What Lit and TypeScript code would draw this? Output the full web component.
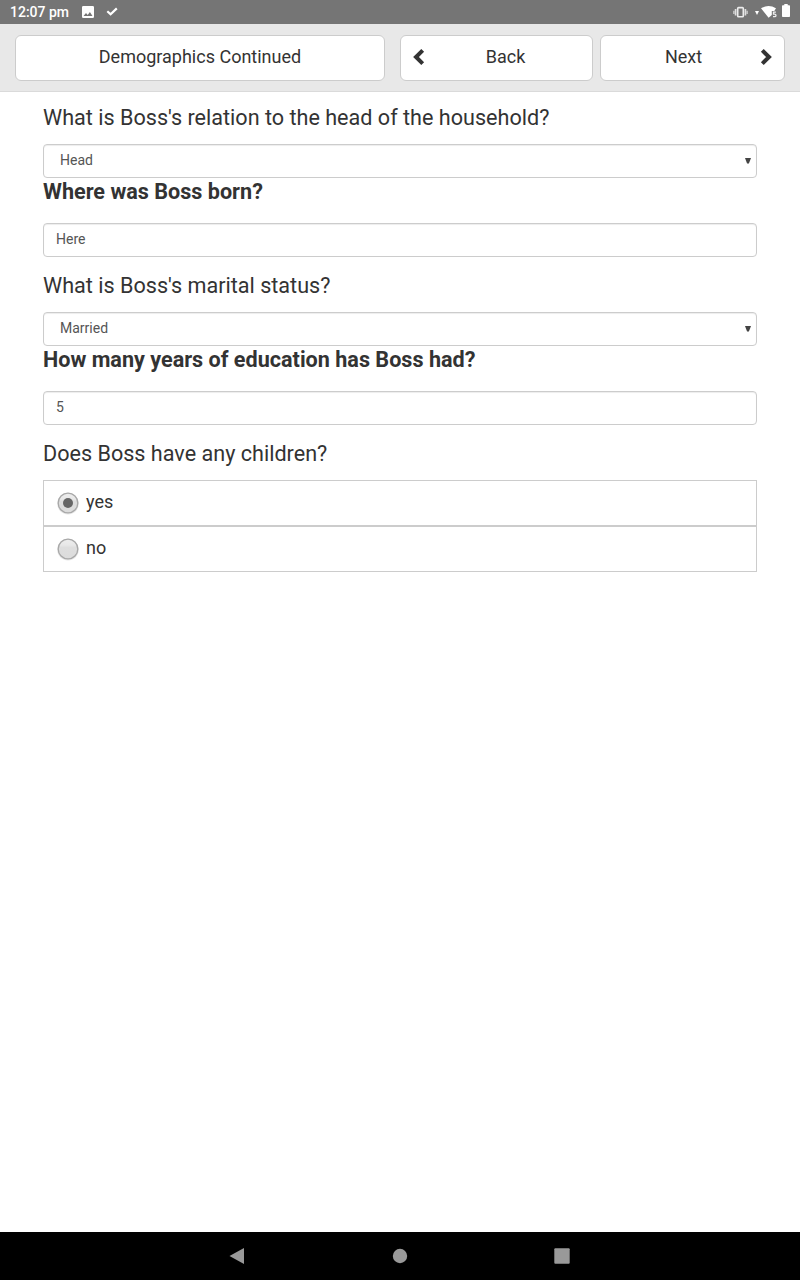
import { LitElement, html, css, svg } from "lit";
import { customElement, state } from "lit/decorators.js";

@customElement("app-root")
export class AppRoot extends LitElement {
  @state() private hasChildren = "yes";

  static styles = css`
    :host {
      display: flex;
      flex-direction: column;
      width: 100%;
      height: 1280px;
      background: #fff;
      color: #333;
      font-family: Roboto, "Liberation Sans", sans-serif;
    }
    * { box-sizing: border-box; }
    svg { display: block; flex: none; }
    .status {
      height: 24px;
      background: #757575;
      color: #fff;
      display: flex;
      align-items: center;
      padding: 0 10px;
      font-size: 14px;
      font-weight: 500;
      line-height: 24px;
    }
    .clock { width: 72px; white-space: nowrap; }
    .check { margin-left: 12px; }
    .spacer { flex: 1; }
    .vibrate { margin-right: 6px; }
    .battery { margin: 0 0 3px 5px; }
    .header {
      height: 68px;
      background: #e8e8e8;
      border-bottom: 1px solid #dadada;
      padding: 11px 15px 10px;
      display: grid;
      grid-template-columns: 378px 193px 185px;
      column-gap: 7px;
    }
    .title { width: 370px; }
    .btn {
      height: 46px;
      background: #fff;
      border: 1px solid #ccc;
      border-radius: 6px;
      font-size: 18px;
      line-height: 42px;
      display: flex;
      align-items: center;
      justify-content: center;
      padding: 0 12px;
    }
    .btn span { flex: 1; text-align: center; align-self: flex-start; }
    .btn svg { margin-bottom: 2px; }
    .back span { padding-left: 6px; }
    .forward span { padding-right: 6px; }
    .form {
      flex: 1;
      padding: 14px 43px 0;
    }
    .q {
      font-size: 21.6px;
      line-height: 24px;
      margin-bottom: 14px;
      white-space: nowrap;
    }
    .bold { font-weight: 700; margin: 2px 0 19px; }
    .q.next { margin-top: 17px; }
    .field {
      height: 34px;
      border: 1px solid #ccc;
      border-radius: 4px;
      box-shadow: inset 0 1px 1px rgba(0, 0, 0, 0.075);
      font-size: 14px;
      line-height: 30px;
      color: #555;
      padding: 0 12px;
      display: flex;
      justify-content: space-between;
    }
    .select { padding: 0 5px 0 16px; align-items: center; }
    .select span { align-self: flex-start; }
    .select svg { margin-bottom: 1px; }
    .option {
      height: 46px;
      border: 1px solid #ccc;
      display: flex;
      align-items: center;
      padding: 0 12px;
      font-size: 18px;
      line-height: 42px;
    }
    .option span { margin-left: 6px; align-self: flex-start; }
    .nav {
      height: 48px;
      background: #000;
      display: flex;
      justify-content: center;
      align-items: center;
      gap: 138px;
    }
  `;

  private select(value: string) {
    return html`<div class="field select">
      <span>${value}</span>
      <svg width="7" height="7" viewBox="0 0 7 7"><path d="M1 1h6L4.900 6.500H3.100z" fill="#444" /></svg>
    </div>`;
  }

  private radio(value: string) {
    const on = this.hasChildren === value;
    return html`<div class="option" @click=${() => (this.hasChildren = value)}>
      <svg width="24" height="24" viewBox="0 0 24 24">
        <defs>
          <linearGradient id="g" x1="0" y1="0" x2="0" y2="1">
            <stop offset="0" stop-color="#ededed" />
            <stop offset=".3" stop-color="#e8e8e8" />
            <stop offset=".42" stop-color="#dedede" />
            <stop offset="1" stop-color="#dcdcdc" />
          </linearGradient>
        </defs>
        <circle cx="12" cy="12.600" r="10.800" fill="#000" opacity=".1" />
        <circle cx="12" cy="12" r="9.800" fill="url(#g)" stroke="#a8a8a8" stroke-width="1.300" />
        ${on ? svg`<circle cx="12" cy="12" r="5" fill="#666"/>` : ""}
      </svg>
      <span>${value}</span>
    </div>`;
  }

  render() {
    return html`
      <div class="status">
        <div class="clock">12:07 pm</div>
        <svg width="12" height="12" viewBox="0 0 12 12">
          <path fill="#fff" fill-rule="evenodd" d="M1.300 0h9.400Q12 0 12 1.300v9.400q0 1.300-1.300 1.300H1.300Q0 12 0 10.700V1.300Q0 0 1.300 0zM1.500 10h9L7.900 6 5.700 8.900 4 7z" />
        </svg>
        <svg class="check" width="12" height="10" viewBox="0 0 12 10">
          <path d="M1.300 4.200 4.600 7.300 10.800 1.400" fill="none" stroke="#fff" stroke-width="2.200" />
        </svg>
        <div class="spacer"></div>
        <svg class="vibrate" width="16" height="12" viewBox="0 0 16 12">
          <rect x="4.700" y="1.600" width="5.600" height="9.200" rx=".8" fill="none" stroke="#ececec" stroke-width="1.600" />
          <path d="M2.600 3v6.600M12.400 3v6.600" stroke="#dedede" stroke-width="1.700" />
          <path d="M.9 4.700v3.200M14.100 4.700v3.200" stroke="#d0d0d0" stroke-width="1.400" />
        </svg>
        <svg width="22" height="14" viewBox="0 0 22 14">
          <path d="M0 6h4L2 10z" fill="#fff" />
          <path d="M6 3.300Q13.500-1.100 21 3.300L19.300 6H16.800v4L13.600 12.800z" fill="#fff" />
          <path d="M20.900 7.200h-2.400v2h1q1.500 0 1.500 1.200T19.500 11.600h-1.500" fill="none" stroke="#eee" stroke-width="1.300" />
        </svg>
        <svg class="battery" width="8" height="13" viewBox="0 0 8 13">
          <path d="M2.300 0h3.400v1.200H7.200q.8 0 .8.800v10.200q0 .8-.8.800H.8q-.8 0-.8-.8V2q0-.8.800-.8h1.500z" fill="#fff" />
        </svg>
      </div>

      <div class="header">
        <div class="btn title"><span>Demographics Continued</span></div>
        <div class="btn back">
          <svg width="12" height="18" viewBox="0 0 12 18"><path d="M9.700 2.400 3 9l6.700 6.600" fill="none" stroke="#333" stroke-width="4" /></svg>
          <span>Back</span>
        </div>
        <div class="btn forward">
          <span>Next</span>
          <svg width="12" height="18" viewBox="0 0 12 18"><path d="M2.300 2.400 9 9l-6.700 6.600" fill="none" stroke="#333" stroke-width="4" /></svg>
        </div>
      </div>

      <div class="form">
        <div class="q">What is Boss's relation to the head of the household?</div>
        ${this.select("Head")}
        <div class="q bold">Where was Boss born?</div>
        <div class="field">Here</div>
        <div class="q next">What is Boss's marital status?</div>
        ${this.select("Married")}
        <div class="q bold">How many years of education has Boss had?</div>
        <div class="field">5</div>
        <div class="q next">Does Boss have any children?</div>
        ${this.radio("yes")} ${this.radio("no")}
      </div>

      <div class="nav">
        <svg width="24" height="24" viewBox="0 0 24 24"><path d="M18 4v16L3.500 12z" fill="#999" /></svg>
        <svg width="24" height="24" viewBox="0 0 24 24"><circle cx="12" cy="12" r="7.200" fill="#999" /></svg>
        <svg width="24" height="24" viewBox="0 0 24 24"><rect x="4.300" y="4.300" width="15.400" height="15.400" rx="1" fill="#999" /></svg>
      </div>
    `;
  }
}
